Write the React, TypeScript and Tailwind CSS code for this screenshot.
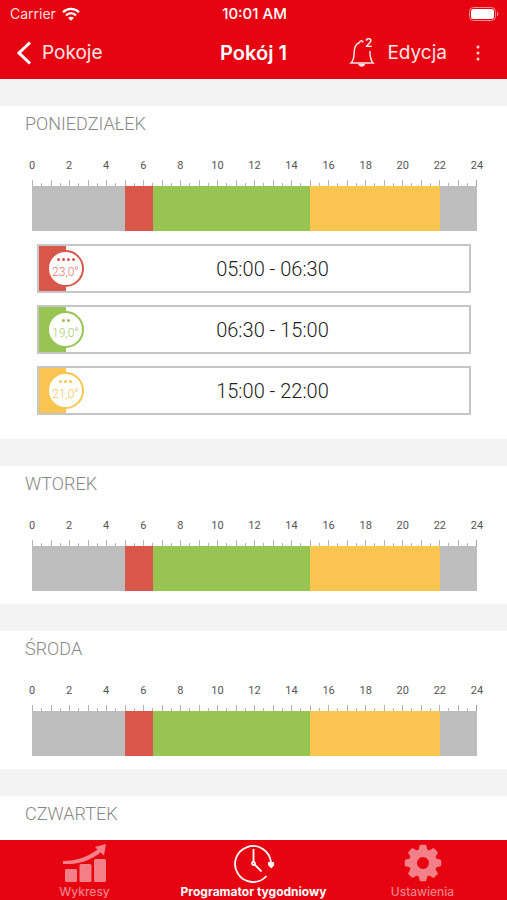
import { useState } from "react";

type Slot = {
  from: number;
  to: number;
  label: string;
  temperature: string;
  dots: number;
  level: "high" | "medium" | "low";
};

const slots: Slot[] = [
  { from: 5, to: 6.5, label: "05:00 - 06:30", temperature: "23,0°", dots: 4, level: "high" },
  { from: 6.5, to: 15, label: "06:30 - 15:00", temperature: "19,0°", dots: 2, level: "low" },
  { from: 15, to: 22, label: "15:00 - 22:00", temperature: "21,0°", dots: 3, level: "medium" },
];

const days = ["PONIEDZIAŁEK", "WTOREK", "ŚRODA", "CZWARTEK"];

const hours = Array.from({ length: 13 }, (_, i) => i * 2);
const halfHours = Array.from({ length: 48 }, (_, i) => i);
const teeth = [0, 45, 90, 135, 180, 225, 270, 315];

const fills = {
  high: "bg-[#d9564b]",
  medium: "bg-[#f9c550]",
  low: "bg-[#97c453]",
};

const badges = {
  high: "border-[#d9564b] text-[#e2756c]",
  medium: "border-[#f9c550] text-[#f9c550]",
  low: "border-[#97c453] text-[#a3cb68]",
};

const StatusBar = () => (
  <div className="grid h-7 grid-cols-3 items-center pr-2 pl-2.5 text-sm font-['Inter',sans-serif]">
    <div className="flex items-center gap-1.5">
      <span className="text-[#ffdcdc]">Carrier</span>
      <svg viewBox="0 0 18 14" className="h-3.5 w-[18px]" fill="none" stroke="white" strokeWidth="2.3">
        <path d="M1 5.2C5.5.8 12.5.8 17 5.2" />
        <path d="M4 8.4c2.9-2.7 7.1-2.7 10 0" />
        <path d="M9 13.8 6.1 10.9c1.6-1.4 4.2-1.4 5.8 0z" fill="white" stroke="none" />
      </svg>
    </div>
    <span className="text-center text-[15px] font-medium">10:01 AM</span>
    <svg viewBox="0 0 30 14" className="h-3.5 w-[30px] justify-self-end">
      <rect x="0.5" y="0.5" width="26" height="13" rx="4" fill="none" stroke="#f58a8e" />
      <rect x="2" y="2" width="23" height="10" rx="2.5" fill="white" />
      <path d="M28 4.5c1.8.8 1.8 4.2 0 5z" fill="#f58a8e" />
    </svg>
  </div>
);

const NavBar = () => (
  <div className="grid h-[51px] grid-cols-[1fr_auto_1fr] items-center px-4 pb-0.5 text-[19px] leading-7 font-['Inter',sans-serif]">
    <a href="#pokoje" className="flex items-center gap-2.5 text-[#ffe4e4]">
      <svg viewBox="0 0 16 24" className="h-6 w-4" fill="none" stroke="white" strokeWidth="3">
        <path d="M14 1.5 3 12l11 10.5" />
      </svg>
      Pokoje
    </a>
    <h1 className="text-xl font-semibold">Pokój 1</h1>
    <div className="flex items-center justify-end">
      <button type="button" aria-label="2" className="mr-3">
        <svg viewBox="0 0 26 36" className="h-9 w-[26px]" fill="none" stroke="#ffe4e4" strokeWidth="1.5">
          <path d="M14 7.500C13.500 5 10.800 5 10.500 7.500 6.500 9 5.300 12.500 5.200 17c-.1 5.500-.5 8.500-3.200 11h22c-2.300-2-2.900-6-3.100-12" />
          <path d="M9.200 28.800h7c-.4 4-6.600 4-7 0z" fill="#ffe4e4" stroke="none" />
          <text x="16" y="12" fontSize="12" fontFamily="Inter, sans-serif" fontWeight="500" fill="white" stroke="none">
            2
          </text>
        </svg>
      </button>
      <button type="button" className="text-[#ffe4e4]">Edycja</button>
      <button type="button" aria-label="Menu" className="ml-7 pr-2.5">
        <svg viewBox="0 0 6 18" className="h-[18px] w-1.5" fill="#ffd0d0">
          <circle cx="3" cy="3" r="1.5" />
          <circle cx="3" cy="9" r="1.5" />
          <circle cx="3" cy="15" r="1.5" />
        </svg>
      </button>
    </div>
  </div>
);

const Timeline = () => (
  <div className="pr-[30px] pl-8">
    <div className="flex justify-between text-[11px] leading-[18px] text-[#555]">
      {hours.map((hour) => (
        <span key={hour} className="flex w-0 justify-center">
          {hour}
        </span>
      ))}
    </div>
    <div className="mt-[5px] flex h-1.5 items-end border-r border-[#a0a0a0]">
      {halfHours.map((i) => (
        <span
          key={i}
          className={`flex-1 border-l border-[#b4b4b4] ${i % 2 === 0 ? "h-1.5" : "h-[3px]"}`}
        />
      ))}
    </div>
    <div className="flex h-[45px] bg-[#bdbdbd]">
      <div style={{ width: `${(slots[0].from / 24) * 100}%` }} />
      {slots.map((slot) => (
        <div
          key={slot.label}
          className={fills[slot.level]}
          style={{ width: `${((slot.to - slot.from) / 24) * 100}%` }}
        />
      ))}
    </div>
  </div>
);

const SlotRow = ({ slot }: { slot: Slot }) => (
  <button
    type="button"
    className="flex h-[49px] w-full items-center border-2 border-[#c6c6c6] bg-white"
  >
    <span className={`flex h-full w-[27px] items-center pl-2 ${fills[slot.level]}`}>
      <span
        className={`flex size-[37px] shrink-0 flex-col items-center rounded-full border-2 bg-white pt-1.5 ${badges[slot.level]}`}
      >
        <span className="flex gap-0.5">
          {Array.from({ length: slot.dots }, (_, i) => (
            <span key={i} className={`size-[3px] rounded-full ${fills[slot.level]}`} />
          ))}
        </span>
        <span className="mt-[3px] text-xs leading-4 font-light">{slot.temperature}</span>
      </span>
    </span>
    <span className="flex-1 pl-2.5 text-center text-xl font-light text-[#222]">{slot.label}</span>
  </button>
);

const DaySection = ({ name, open, onToggle }: { name: string; open: boolean; onToggle: () => void }) => (
  <section className="mt-[27px] bg-white pt-1">
    <h2 className="px-[25px] text-lg leading-7 font-light text-[#888]">
      <button type="button" onClick={onToggle}>{name}</button>
    </h2>
    <div className="pt-[19px] pb-[13px]">
      <Timeline />
      {open && (
        <div className="flex flex-col gap-3 pt-[13px] pr-9 pb-[11px] pl-[37px]">
          {slots.map((slot) => (
            <SlotRow key={slot.label} slot={slot} />
          ))}
        </div>
      )}
    </div>
  </section>
);

const ChartIcon = () => (
  <svg viewBox="0 0 44 40" className="h-10 w-11" fill="currentColor">
    <rect x="2" y="25" width="12" height="13" rx="1.5" />
    <rect x="16.500" y="20" width="12" height="18" rx="1.5" />
    <rect x="31" y="15" width="12" height="23" rx="1.5" />
    <path d="M0 17C14 17 24 13 34.500 5.500L32 3 43 0 41 11.500 37.500 8.500C26 17.500 15 20.500 0 20z" />
  </svg>
);

const ClockIcon = () => (
  <svg viewBox="0 0 40 40" className="size-10" fill="none" stroke="currentColor" strokeWidth="1.8">
    <path d="M32.500 32A18 18 0 1 1 37 18.500" />
    <path d="M34 18h6.500v3l-3.200 3.500-3.300-3.500z" fill="currentColor" stroke="none" />
    <path d="M19.500 5v13.500M20.500 20.500l7 7" />
    <circle cx="19.500" cy="19.500" r="1.500" />
  </svg>
);

const GearIcon = () => (
  <svg viewBox="0 0 38 38" className="size-[38px]" fill="currentColor">
    <circle cx="19" cy="19" r="10" fill="none" stroke="currentColor" strokeWidth="8" />
    {teeth.map((angle) => (
      <path key={angle} d="M14.500 7l1-5q.2-1.200 1.200-1.200h4.600q1 0 1.200 1.200l1 5z" transform={`rotate(${angle} 19 19)`} />
    ))}
  </svg>
);

const tabs = [
  { label: "Wykresy", icon: <ChartIcon /> },
  { label: "Programator tygodniowy", icon: <ClockIcon /> },
  { label: "Ustawienia", icon: <GearIcon /> },
];

const TabBar = () => {
  const [active, setActive] = useState("Programator tygodniowy");

  return (
    <nav className="grid h-[60px] shrink-0 grid-cols-3 bg-[#e60411] font-['Inter',sans-serif]">
      {tabs.map(({ label, icon }) => (
        <button
          key={label}
          type="button"
          onClick={() => setActive(label)}
          className={`flex flex-col items-center justify-between pt-1 pb-0.5 text-xs leading-4 whitespace-nowrap ${
            active === label ? "font-bold text-white" : "font-medium text-[#f38088]"
          }`}
        >
          {icon}
          {label}
        </button>
      ))}
    </nav>
  );
};

export default function App() {
  const [openDay, setOpenDay] = useState("PONIEDZIAŁEK");

  return (
    <div className="flex h-dvh flex-col bg-[#f3f3f3] font-['Roboto',sans-serif]">
      <header className="shrink-0 bg-[#e60411] text-white">
        <StatusBar />
        <NavBar />
      </header>
      <main className="min-h-0 flex-1 overflow-y-auto [scrollbar-width:none]">
        {days.map((day) => (
          <DaySection
            key={day}
            name={day}
            open={openDay === day}
            onToggle={() => setOpenDay(openDay === day ? "" : day)}
          />
        ))}
      </main>
      <TabBar />
    </div>
  );
}
